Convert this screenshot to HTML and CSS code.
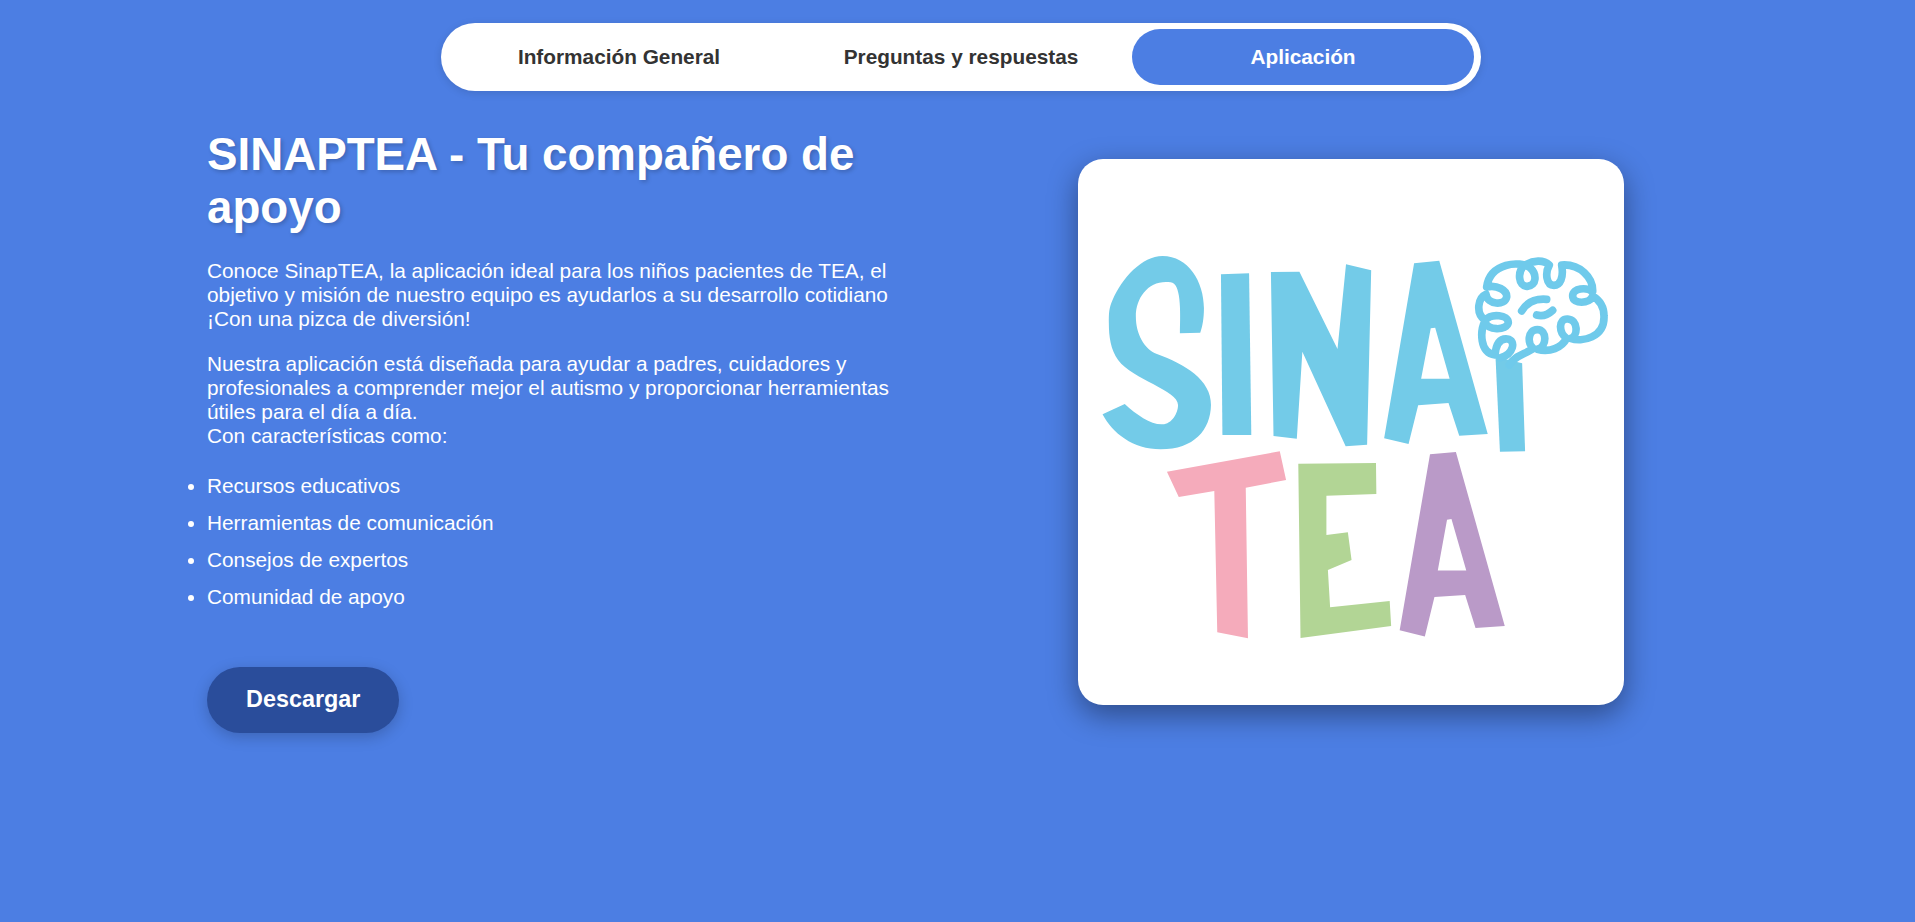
FILE: index.html
```html
<!DOCTYPE html>
<html lang="es">
<head>
  <meta charset="UTF-8" />
  <title>SinapTEA | Aplicación</title>
  <link rel="stylesheet" href="styles.css">
</head>
<body>

  <nav class="tabs">
    <a class="tab" href="#">Información General</a>
    <a class="tab" href="#">Preguntas y respuestas</a>
    <a class="tab active" href="#">Aplicación</a>
  </nav>

  <main class="app-section">
    <section class="app-info">
      <h1>SINAPTEA - Tu compañero de apoyo</h1>
      <p>Conoce SinapTEA, la aplicación ideal para los niños pacientes de TEA, el objetivo y misión de nuestro equipo es ayudarlos a su desarrollo cotidiano ¡Con una pizca de diversión!</p>
      <p>Nuestra aplicación está diseñada para ayudar a padres, cuidadores y profesionales a comprender mejor el autismo y proporcionar herramientas útiles para el día a día.<br>Con características como:</p>
      <ul class="features">
        <li>Recursos educativos</li>
        <li>Herramientas de comunicación</li>
        <li>Consejos de expertos</li>
        <li>Comunidad de apoyo</li>
      </ul>
      <a class="download" href="#">Descargar</a>
    </section>

    <section class="app-logo">
      <div class="logo-card">
        <svg class="logo" viewBox="0 0 546 546" role="img" aria-label="Logo de SinapTEA">
          <g transform="translate(-8 -9) scale(0.37 0.3333)">
            <g class="sky">
              <path d="M250 318 C320 318 362 395 362 475 C362 505 358 530 352 548 L297 550 C299 480 300 400 272 397 C215 388 178 440 178 500 C178 550 200 597 235 612 C310 642 382 690 381 765 C380 840 335 898 245 898 C170 898 115 850 88 793 L148 762 C180 795 220 825 250 823 C275 822 292 790 292 765 C292 720 170 690 130 630 C110 600 105 560 105 520 C105 490 105 475 115 450 C140 385 195 318 250 318 Z"/>
              <polygon points="408,373 484,370 490,855 412,855"/>
              <polygon points="543,366 620,365 723,597 746,343 814,361 803,884 745,889 628,605 613,866 550,858"/>
              <path fill-rule="evenodd" d="M930 340 L998 332 L1129 852 L1052 857 L1023 759 L941 766 L915 882 L849 865 Z M975 535 L987 533 L1026 686 L949 686 Z"/>
              <polygon points="1150,620 1162,905 1230,904 1222,640"/>
            </g>
            <polygon class="pink" points="262,965 567,904 584,990 475,1013 481,1465 398,1447 390,1023 294,1041"/>
            <polygon class="green" points="617,941 827,939 828,1032 693,1037 693,1155 751,1147 761,1230 697,1260 703,1372 864,1353 868,1428 623,1464"/>
            <path class="purple" fill-rule="evenodd" d="M973 913 L1043 906 L1175 1428 L1096 1434 L1068 1335 L985 1341 L959 1460 L891 1441 Z M1019 1109 L1031 1107 L1071 1262 L994 1262 Z"/>
          </g>
          <!-- brain -->
          <g class="brain" transform="translate(372 82) scale(0.3333)">
            <path d="M178 372 C192 345 225 340 250 322 C232 310 232 266 262 266 C292 266 292 318 262 325 C300 335 335 320 350 292 C325 275 325 232 353 234 C385 236 385 285 362 292 C395 305 465 290 462 225 C462 200 450 178 428 165 C420 190 368 190 368 165 C368 140 410 138 428 152 C430 110 390 68 335 72 C342 110 330 133 312 133 C288 133 285 95 298 72 C280 55 250 58 225 72 C200 90 205 138 232 136 C260 134 262 100 240 80 C210 58 120 65 110 138 C140 130 172 148 170 168 C165 195 112 192 108 160 C85 170 75 215 105 238 C125 215 175 222 175 245 C172 270 108 270 105 240 C90 270 88 335 135 342 C138 310 150 292 172 294 C200 298 190 340 152 350"/>
            <path d="M215 210 C230 185 255 172 290 175"/>
            <path d="M260 222 C280 228 295 220 308 208"/>
          </g>
        </svg>
      </div>
    </section>
  </main>

</body>
</html>
```
FILE: styles.css
```css
body {
  font-family: "Liberation Sans", Arial, sans-serif;
  margin: 0;
  background-color: #4c7ee3;
  color: white;
  min-height: 922px;
}

.tabs {
  display: flex;
  width: 1026px;
  margin: 23px 0 0 441px;
  padding: 6px 7px;
  background: white;
  border-radius: 34px;
  box-shadow: 0 2px 8px rgba(0, 0, 0, 0.12);
}

.tab {
  flex: 1;
  height: 56px;
  line-height: 56px;
  text-align: center;
  font-size: 20.8px;
  font-weight: bold;
  color: #333;
  text-decoration: none;
  border-radius: 28px;
}

.tab.active {
  background-color: #4c7ee3;
  color: white;
}

.app-section {
  display: flex;
  align-items: center;
  gap: 76px;
  width: 1500px;
  margin: 37px 0 0 207px;
}

.app-info,
.app-logo {
  flex: 1;
}

.app-info {
  padding-bottom: 3px;
}

.app-info h1 {
  font-size: 45.7px;
  line-height: 53px;
  margin: 0 0 25px;
  text-shadow: 2px 2px 4px rgba(0, 0, 0, 0.2);
}

.app-info p {
  font-size: 20.8px;
  margin: 0 0 20.8px;
}

.features {
  list-style: disc;
  margin: 26px 0 58px;
  padding: 0;
  font-size: 20.8px;
}

.features li {
  margin-bottom: 13px;
}

.download {
  display: inline-block;
  padding: 19.5px 39px;
  font-size: 23.4px;
  font-weight: bold;
  color: white;
  text-decoration: none;
  background-color: #2a4d9b;
  border-radius: 33px;
  box-shadow: 0 4px 15px rgba(0, 0, 0, 0.2);
}

.app-logo {
  display: flex;
  justify-content: center;
}

.logo-card {
  width: 546px;
  height: 546px;
  background: white;
  border-radius: 25px;
  box-shadow: 0 10px 30px rgba(0, 0, 0, 0.4);
}

.logo {
  display: block;
  width: 546px;
  height: 546px;
}

.sky { fill: #73cbe8; }
.pink { fill: #f5abbb; }
.green { fill: #b2d595; }
.purple { fill: #ba9ac8; }

.brain path {
  fill: none;
  stroke: #6fcaeb;
  stroke-width: 23;
  stroke-linecap: round;
  stroke-linejoin: round;
}
```
